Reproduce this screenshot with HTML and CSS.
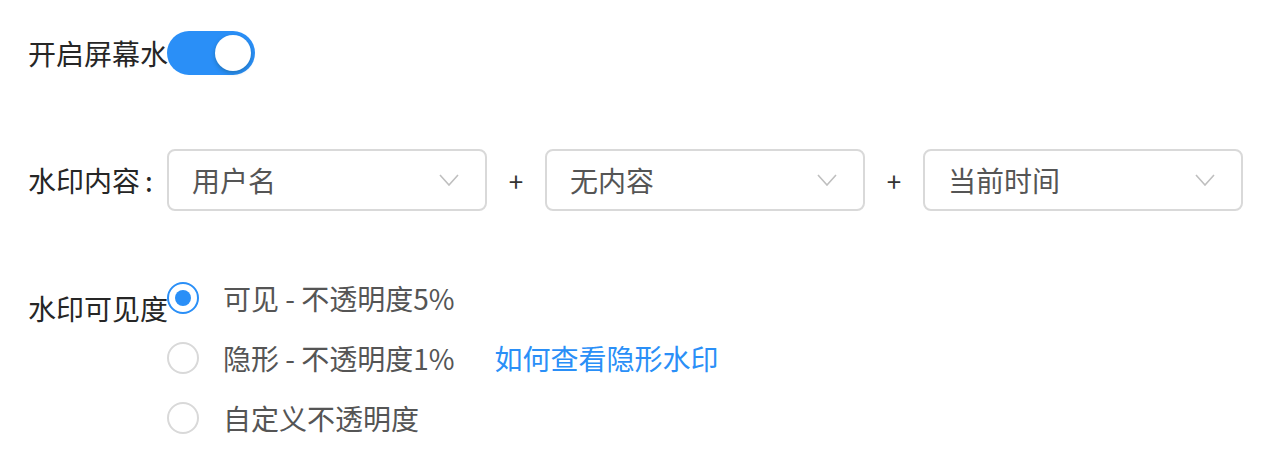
FILE: index.html
```html
<!DOCTYPE html>
<html lang="zh-CN">
<head>
<meta charset="UTF-8" />
<meta name="viewport" content="width=device-width, initial-scale=1" />
<title>屏幕水印设置</title>
<link rel="stylesheet" href="styles.css">
</head>
<body>

<main class="settings">
  <div class="row row-switch">
    <div class="label">开启屏幕水</div>
    <div class="switch on"><span class="knob"></span></div>
  </div>

  <div class="row row-content">
    <div class="label">水印内容<span class="colon">:</span></div>
    <div class="select">
      <span class="select-text">用户名</span>
      <svg class="arrow" width="20" height="12" viewBox="0 0 20 12"><path d="M1 1 L10 11 L19 1" fill="none" stroke="#bfbfbf" stroke-width="1.6"/></svg>
    </div>
    <div class="plus">+</div>
    <div class="select">
      <span class="select-text">无内容</span>
      <svg class="arrow" width="20" height="12" viewBox="0 0 20 12"><path d="M1 1 L10 11 L19 1" fill="none" stroke="#bfbfbf" stroke-width="1.6"/></svg>
    </div>
    <div class="plus">+</div>
    <div class="select">
      <span class="select-text">当前时间</span>
      <svg class="arrow" width="20" height="12" viewBox="0 0 20 12"><path d="M1 1 L10 11 L19 1" fill="none" stroke="#bfbfbf" stroke-width="1.6"/></svg>
    </div>
  </div>

  <div class="row row-visible">
    <div class="label label-visible">水印可见度</div>
    <div class="radio-group">
      <div class="radio-item">
        <span class="radio checked"></span>
        <span class="radio-text">可见 - 不透明度5%</span>
      </div>
      <div class="radio-item">
        <span class="radio"></span>
        <span class="radio-text">隐形 - 不透明度1%</span>
        <a class="help-link" href="#">如何查看隐形水印</a>
      </div>
      <div class="radio-item">
        <span class="radio"></span>
        <span class="radio-text">自定义不透明度</span>
      </div>
    </div>
  </div>
</main>

</body>
</html>
```

FILE: styles.css
```css
body {
  margin: 0; padding: 0;
  font-family: "Noto Sans CJK SC", "Noto Sans", sans-serif;
  background: #fff;
  color: #333;
}
.settings {
  padding: 31px 28px 0;
}
.row {
  display: flex;
  align-items: center;
}
.label {
  width: 139px;
  flex: none;
  white-space: nowrap;
  font-size: 28px;
  color: #262626;
}
.label .colon {
  margin-left: 5px;
}
.row-switch {
  height: 44px;
}
.switch {
  width: 88px;
  height: 44px;
  border-radius: 22px;
  background: #bfbfbf;
  position: relative;
  flex: none;
}
.switch.on {
  background: #2a8ff7;
}
.knob {
  position: absolute;
  top: 4px;
  right: 4px;
  width: 36px;
  height: 36px;
  border-radius: 50%;
  background: #fff;
  box-shadow: 0 2px 4px rgba(0,35,11,0.25);
}
.row-content {
  margin-top: 74px;
  height: 62px;
}
.select {
  width: 320px;
  height: 62px;
  box-sizing: border-box;
  border: 2px solid #d9d9d9;
  border-radius: 8px;
  display: flex;
  align-items: center;
  justify-content: space-between;
  padding: 0 26px 0 23px;
  flex: none;
}
.select-text {
  font-size: 28px;
  color: #555;
}
.plus {
  width: 58px;
  text-align: center;
  font-size: 26px;
  color: #333;
}
.row-visible {
  margin-top: 57px;
  align-items: flex-start;
}
.label-visible {
  line-height: 60px;
  padding-top: 10px;
}
.radio-group {
  display: flex;
  flex-direction: column;
}
.radio-item {
  display: flex;
  align-items: center;
  height: 60px;
}
.radio {
  width: 32px;
  height: 32px;
  box-sizing: border-box;
  border: 2px solid #d9d9d9;
  border-radius: 50%;
  margin-right: 24px;
  position: relative;
  flex: none;
}
.radio.checked {
  border-color: #2a8ff7;
}
.radio.checked::after {
  content: "";
  position: absolute;
  top: 6px;
  left: 6px;
  width: 16px;
  height: 16px;
  border-radius: 50%;
  background: #2a8ff7;
}
.radio-text {
  font-size: 28px;
  color: #555;
}
.help-link {
  margin-left: 40px;
  font-size: 28px;
  color: #2a8ff7;
  text-decoration: none;
}
```
